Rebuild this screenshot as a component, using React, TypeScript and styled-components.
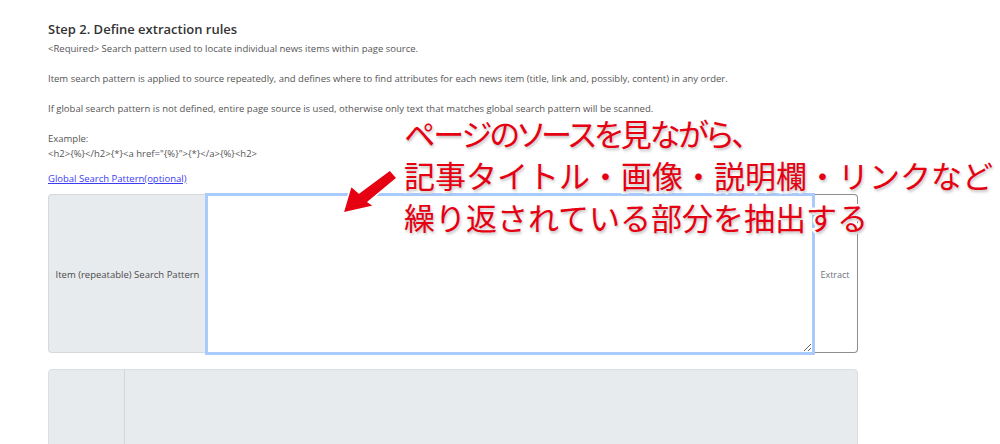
import React from 'react';
import styled, { createGlobalStyle } from 'styled-components';

const GlobalStyle = createGlobalStyle`
  body {
    margin: 0;
    background: #fff;
    font-family: "Open Sans", "Noto Sans", sans-serif;
    color: #555;
  }
`;

const Page = styled.div`
  position: relative;
  width: 1000px;
  height: 444px;
  overflow: hidden;
  padding: 20px 0 0 48px;
  box-sizing: border-box;
`;

const Section = styled.div`
  width: 810px;
`;

const Heading = styled.h3`
  margin: 0 0 3px;
  font-size: 13px;
  line-height: 18px;
  font-weight: 600;
  color: #333;
`;

const Para = styled.p<{ gap?: number }>`
  margin: 0 0 ${({ gap }) => gap ?? 15}px;
  font-size: 9.5px;
  line-height: 15px;
  color: #555;
`;

const Code = styled.span`
  display: block;
`;

const Link = styled.a`
  display: block;
  width: fit-content;
  font-size: 9.5px;
  line-height: 15px;
  color: #3b3bf2;
  text-decoration: underline;
  margin-bottom: 8px;
`;

const InputGroup = styled.div`
  display: flex;
  height: 159px;
  margin-bottom: 16px;
`;

const Label = styled.div<{ width: number }>`
  width: ${({ width }) => width}px;
  flex-shrink: 0;
  display: flex;
  align-items: center;
  justify-content: center;
  padding-top: 2px;
  background: #e8ebee;
  border: 1px solid #d6d9dc;
  border-right: none;
  border-radius: 4px 0 0 4px;
  font-size: 9.5px;
  color: #4a4a4a;
  box-sizing: border-box;
`;

const TextArea = styled.textarea`
  flex: 1;
  margin: -1px -2px -2px -1px;
  border: 3px solid #a9cbfb;
  background: #fff;
  resize: vertical;
  outline: none;
  box-sizing: border-box;
  font-family: inherit;
  position: relative;
`;

const Button = styled.button`
  width: 45px;
  flex-shrink: 0;
  border: 1px solid #8e8e8e;
  border-left: none;
  border-radius: 0 4px 4px 0;
  background: #fff;
  color: #6c757d;
  font-family: inherit;
  font-size: 9px;
  padding: 2px 0 0;
`;

const Panel = styled.div`
  display: flex;
  height: 120px;
  background: #e8ebee;
  border: 1px solid #dcdfe2;
  border-radius: 4px 4px 0 0;
`;

const PanelSide = styled.div`
  width: 75px;
  border-right: 1px solid #d3d6d9;
`;

const Note = styled.div`
  position: absolute;
  left: 404px;
  top: 116px;
  display: flex;
  flex-direction: column;
  gap: 8px;
  font-family: "Noto Sans CJK JP", sans-serif;
  font-size: 31px;
  font-weight: 400;
  line-height: 34px;
  color: #e50012;
  -webkit-text-stroke: 5px #fff;
  paint-order: stroke fill;
  text-shadow: 1px 2px 3px rgba(0, 0, 0, 0.25);
  white-space: nowrap;
`;

const NoteLine = styled.div<{ tight?: boolean }>`
  ${({ tight }) => (tight ? 'font-feature-settings: "palt"; letter-spacing: -2px;' : '')}
`;

const Arrow = styled.svg`
  position: absolute;
  left: 330px;
  top: 160px;
  overflow: visible;
`;

export default function App() {
  return (
    <>
      <GlobalStyle />
      <Page>
        <Section>
          <Heading>Step 2. Define extraction rules</Heading>
          <Para>&lt;Required&gt; Search pattern used to locate individual news items within page source.</Para>
          <Para>
            Item search pattern is applied to source repeatedly, and defines where to find attributes for each news item (title, link and, possibly, content) in any order.
          </Para>
          <Para>
            If global search pattern is not defined, entire page source is used, otherwise only text that matches global search pattern will be scanned.
          </Para>
          <Para gap={10}>
            Example:
            <Code>&lt;h2&gt;{'{%}'}&lt;/h2&gt;{'{*}'}&lt;a href="{'{%}'}"&gt;{'{*}'}&lt;/a&gt;{'{%}'}&lt;h2&gt;</Code>
          </Para>
          <Link href="#">Global Search Pattern(optional)</Link>
          <InputGroup>
            <Label width={158}>Item (repeatable) Search Pattern</Label>
            <TextArea />
            <Button>Extract</Button>
          </InputGroup>
          <Panel>
            <PanelSide />
          </Panel>
        </Section>

        <Arrow width="80" height="60" viewBox="0 0 80 60">
          <polygon
            points="13,53 21,26 29,33 60,10 67,18 38,42 44,46"
            fill="#e50012"
            stroke="#fff"
            strokeWidth="1.5"
            strokeLinejoin="round"
          />
        </Arrow>

        <Note>
          <NoteLine tight>ページのソースを見ながら、</NoteLine>
          <NoteLine>記事タイトル・画像・説明欄・リンクなど</NoteLine>
          <NoteLine>繰り返されている部分を抽出する</NoteLine>
        </Note>
      </Page>
    </>
  );
}
